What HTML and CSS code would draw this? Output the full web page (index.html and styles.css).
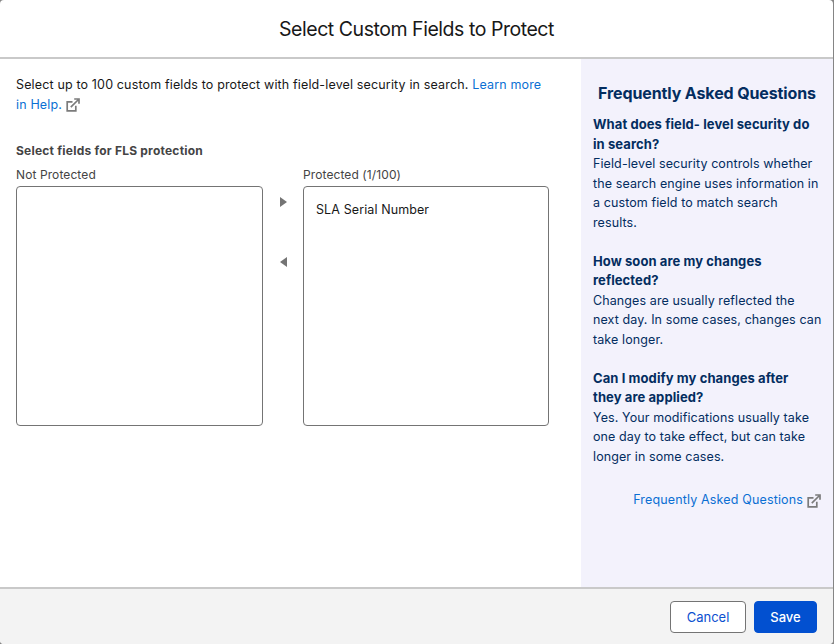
FILE: index.html
```html
<!DOCTYPE html>
<html lang="en">
<head>
    <meta charset="utf-8">
    <title>Select Custom Fields to Protect</title>
    <meta name="viewport" content="width=device-width, initial-scale=1">
    <link rel="stylesheet" href="styles.css">
</head>
<body>
    <div class="modal">
        <header class="modal-header">
            <h1>Select Custom Fields to Protect</h1>
        </header>

        <div class="modal-body">
            <!-- field picker -->
            <main class="content">
                <p class="intro">Select up to 100 custom fields to protect with field-level security in search. <a class="learn" href="#">Learn more<br>in Help.</a>
                    <svg class="ext" viewBox="0 0 14 14"><path d="M6.5 3.8H1.2V12.8h8.6V7.8M4.8 9.2L12 2M8.2 1H13v4.8" /></svg>
                </p>

                <h2>Select fields for FLS protection</h2>
                <div class="picker">
                    <div class="column">
                        <span class="label">Not Protected</span>
                        <ul class="listbox"></ul>
                    </div>
                    <div class="arrows">
                        <button type="button" aria-label="Protect"><svg viewBox="0 0 7 10"><path d="M0 0L7 5L0 10Z" /></svg></button>
                        <button type="button" aria-label="Remove"><svg viewBox="0 0 7 10"><path d="M7 0L0 5L7 10Z" /></svg></button>
                    </div>
                    <div class="column">
                        <span class="label">Protected (1/100)</span>
                        <ul class="listbox">
                            <li>SLA Serial Number</li>
                        </ul>
                    </div>
                </div>
            </main>

            <!-- faq -->
            <aside class="faq">
                <h2>Frequently Asked Questions</h2>
                <h3>What does field- level security do<br>in search?</h3>
                <p>Field-level security controls whether<br>the search engine uses information in<br>a custom field to match search<br>results.</p>
                <h3>How soon are my changes<br>reflected?</h3>
                <p>Changes are usually reflected the<br>next day. In some cases, changes can<br>take longer.</p>
                <h3>Can I modify my changes after<br>they are applied?</h3>
                <p>Yes. Your modifications usually take<br>one day to take effect, but can take<br>longer in some cases.</p>
                <div class="faq-link">
                    <a href="#">Frequently Asked Questions</a>
                    <svg class="ext" viewBox="0 0 14 14"><path d="M6.5 3.8H1.2V12.8h8.6V7.8M4.8 9.2L12 2M8.2 1H13v4.8" /></svg>
                </div>
            </aside>
        </div>

        <footer class="modal-footer">
            <button type="button" class="btn">Cancel</button>
            <button type="button" class="btn btn-brand">Save</button>
        </footer>
    </div>
</body>
</html>
```
FILE: styles.css
```css
* {box-sizing: border-box; margin: 0; padding: 0;}
body {background: #858585; font: 12.5px/19.5px Inter, "Liberation Sans", sans-serif; letter-spacing: 0.1px; color: #181818;}
a {color: #0b6fd3; text-decoration: none;}
ul {list-style: none;}

.modal {display: flex; flex-direction: column; width: 833px; height: 644px; background: #fff; border-radius: 4px; overflow: hidden;}
.modal-header {height: 59px; padding-top: 14px; border-bottom: 2px solid #c9c9c9; text-align: center;}
.modal-header h1 {font-size: 19.5px; line-height: 30px; font-weight: 400; letter-spacing: -0.46px;}
.modal-body {display: flex; flex: 1;}

.content {flex: 1; padding: 16px;}
.intro {white-space: nowrap; letter-spacing: 0.15px;}
.ext {width: 14px; height: 14px; fill: none; stroke: #7b7b7b; stroke-width: 1.7;}
.intro .ext {vertical-align: -3px;}
.content h2 {margin-top: 28px; font-size: 12px; line-height: 18px; font-weight: 700; letter-spacing: 0.22px; color: #444;}
.picker {display: flex; margin-top: 6px;}
.label {display: block; font-size: 12px; line-height: 18px; color: #444; white-space: nowrap;}
.column {width: 247px;}
.column:last-child {width: 246px;}
.listbox {height: 240px; margin-top: 2px; padding: 13px 12px; border: 1px solid #747474; border-radius: 4px;}
.arrows {display: flex; flex-direction: column; width: 40px; padding-top: 31px; align-items: center; gap: 50px;}
.arrows button {display: block; height: 10px; border: 0; background: none;}
.arrows svg {display: block; width: 7px; height: 10px; fill: #747474;}

.faq {width: 252px; padding: 24px 12px 0; background: #f3f2fc; color: #032d60; white-space: nowrap;}
.faq h2 {margin-bottom: 12px; font-size: 16px; line-height: 20px; font-weight: 700; letter-spacing: -0.12px; text-align: center;}
.faq h3 {font-size: 13px; line-height: 19.5px; font-weight: 700; letter-spacing: 0.09px;}
.faq p {margin-bottom: 19.5px;}
.faq-link {display: flex; justify-content: flex-end; align-items: center; gap: 4px; margin-top: 24px; letter-spacing: 0.15px;}
.faq-link .ext {margin-top: 3px;}

.modal-footer {display: flex; justify-content: flex-end; gap: 8px; height: 57px; padding: 12px 16px; background: #f3f3f3; border-top: 2px solid #c9c9c9;}
.btn {width: 76px; height: 32px; padding-top: 1px; border: 1px solid #747474; border-radius: 4px; background: #fff; font: inherit; font-size: 13px; color: #0b50d0;}
.btn-brand {width: 63px; border-color: #0250d0; background: #0250d0; color: #fff; font-weight: 500;}
```
